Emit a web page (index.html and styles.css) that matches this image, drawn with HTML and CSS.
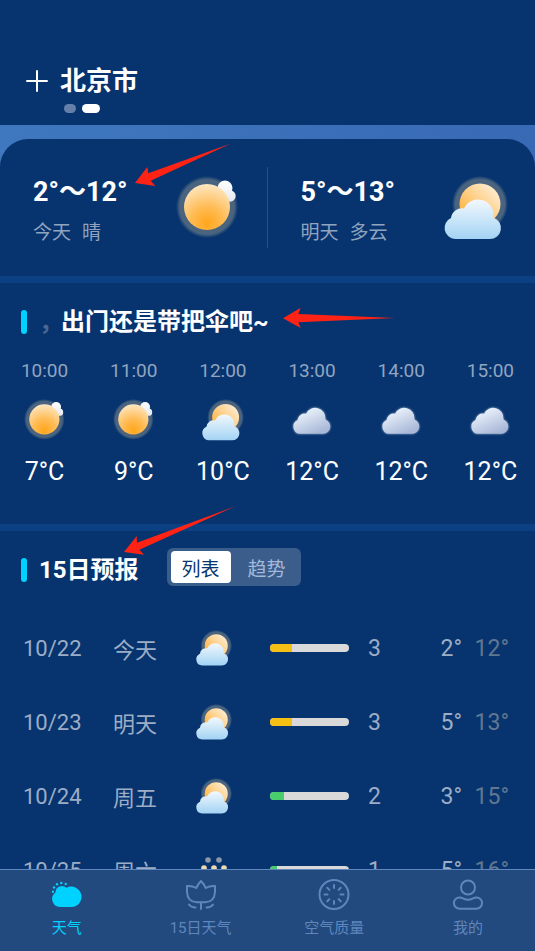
FILE: index.html
```html
<!DOCTYPE html>
<html lang="zh-CN">
<head>
    <meta charset="UTF-8">
    <meta name="viewport" content="width=device-width, initial-scale=1.0">
    <title>天气</title>
    <link rel="stylesheet" href="styles.css">
</head>
<body>

    <!-- Weather icons -->
    <svg class="sprite" width="0" height="0" aria-hidden="true">
        <defs>
            <radialGradient id="sunFill" cx="0.5" cy="0.85" r="0.9">
                <stop offset="0" stop-color="#ffa61c"/>
                <stop offset="0.4" stop-color="#ffbc55"/>
                <stop offset="1" stop-color="#fdebcd"/>
            </radialGradient>
            <linearGradient id="sunBehind" x1="0.1" y1="0.8" x2="0.8" y2="0.1">
                <stop offset="0" stop-color="#ffb340"/>
                <stop offset="1" stop-color="#feeacb"/>
            </linearGradient>
            <radialGradient id="halo">
                <stop offset="0.88" stop-color="#f7dfa8" stop-opacity="0.28"/>
                <stop offset="1" stop-color="#f7dfa8" stop-opacity="0"/>
            </radialGradient>
            <linearGradient id="cloudBlue" gradientUnits="userSpaceOnUse" x1="28" y1="23" x2="28" y2="63">
                <stop offset="0" stop-color="#f3f9fe"/>
                <stop offset="1" stop-color="#a3d3f4"/>
            </linearGradient>
            <linearGradient id="cloudGrey" gradientUnits="userSpaceOnUse" x1="20" y1="26" x2="36" y2="63">
                <stop offset="0" stop-color="#eaf2fb"/>
                <stop offset="1" stop-color="#a9b8d8"/>
            </linearGradient>
            <linearGradient id="puff" gradientUnits="userSpaceOnUse" x1="50" y1="4" x2="50" y2="26">
                <stop offset="0" stop-color="#ffffff"/>
                <stop offset="1" stop-color="#e4e9ef"/>
            </linearGradient>
            <filter id="glow" x="-20%" y="-20%" width="140%" height="140%">
                <feGaussianBlur stdDeviation="2"/>
            </filter>
            <path id="cloud" d="M11 63A11 11 0 0 1 7 42A11 11 0 0 1 20 32.500A15.500 15.500 0 0 1 49.500 40.500L49.800 41.700A11 11 0 0 1 46 63Z"/>
        </defs>
        <symbol id="sunny" viewBox="0 0 64 64" overflow="visible">
            <circle cx="31" cy="31" r="31" fill="url(#halo)"/>
            <g fill="url(#puff)">
                <circle cx="49" cy="12" r="7.500"/>
                <circle cx="54" cy="20" r="5.700"/>
            </g>
            <circle cx="31" cy="31" r="23" fill="url(#sunFill)"/>
        </symbol>
        <symbol id="cloudy" viewBox="0 0 64 64" overflow="visible">
            <circle cx="36" cy="28" r="28" fill="url(#halo)"/>
            <circle cx="36" cy="28" r="20.500" fill="url(#sunBehind)"/>
            <use href="#cloud" fill="url(#cloudBlue)"/>
        </symbol>
        <symbol id="overcast" viewBox="0 0 64 64" overflow="visible">
            <g transform="translate(3 -10)">
                <use href="#cloud" fill="#c9d5e8" opacity="0.8" filter="url(#glow)"/>
                <use href="#cloud" fill="url(#cloudGrey)"/>
            </g>
        </symbol>
        <symbol id="haze" viewBox="0 0 36 36" overflow="visible">
            <g fill="#8c98a8">
                <circle cx="12" cy="8" r="2.800"/>
                <circle cx="23" cy="8" r="2.800"/>
            </g>
            <g fill="#f0d9b0">
                <circle cx="8" cy="16" r="2.800"/>
                <circle cx="18" cy="16" r="2.800"/>
                <circle cx="28" cy="16" r="2.800"/>
                <circle cx="12" cy="24" r="2.800"/>
                <circle cx="23" cy="24" r="2.800"/>
            </g>
        </symbol>
    </svg>

    <main>
        <header>
            <div class="city">
                <button class="add" type="button" aria-label="添加城市">
                    <svg width="22" height="22" viewBox="0 0 22 22"><path d="M11 1V21M1 11H21" stroke="#fff" stroke-width="2" stroke-linecap="round"/></svg>
                </button>
                <h1>北京市</h1>
            </div>
            <div class="dots">
                <span class="dot"></span>
                <span class="dot active"></span>
            </div>
        </header>

        <div class="sky">
            <section class="days">
                <div class="day">
                    <div>
                        <p class="range">2°～12°</p>
                        <p class="desc"><span>今天</span><span>晴</span></p>
                    </div>
                    <svg class="icon-large"><use href="#sunny"/></svg>
                </div>
                <div class="day">
                    <div>
                        <p class="range">5°～13°</p>
                        <p class="desc"><span>明天</span><span>多云</span></p>
                    </div>
                    <svg class="icon-large"><use href="#cloudy"/></svg>
                </div>
            </section>
        </div>

        <section class="hourly">
            <h2><span class="comma">，</span>出门还是带把伞吧~</h2>
            <ul class="hours">
                <li><span class="time">10:00</span><svg class="icon-medium"><use href="#sunny"/></svg><span class="temp">7°C</span></li>
                <li><span class="time">11:00</span><svg class="icon-medium"><use href="#sunny"/></svg><span class="temp">9°C</span></li>
                <li><span class="time">12:00</span><svg class="icon-medium"><use href="#cloudy"/></svg><span class="temp">10°C</span></li>
                <li><span class="time">13:00</span><svg class="icon-medium"><use href="#overcast"/></svg><span class="temp">12°C</span></li>
                <li><span class="time">14:00</span><svg class="icon-medium"><use href="#overcast"/></svg><span class="temp">12°C</span></li>
                <li><span class="time">15:00</span><svg class="icon-medium"><use href="#overcast"/></svg><span class="temp">12°C</span></li>
            </ul>
        </section>

        <section class="forecast">
            <div class="forecast-head">
                <h2>15日预报</h2>
                <div class="toggle">
                    <button type="button" class="active">列表</button>
                    <button type="button">趋势</button>
                </div>
            </div>
            <table>
                <tr>
                    <td class="date">10/22</td>
                    <td class="week">今天</td>
                    <td class="sky-icon"><svg class="icon-small"><use href="#cloudy"/></svg></td>
                    <td class="air"><div class="bar"><div class="fill yellow" style="width: 28%"></div></div></td>
                    <td>3</td>
                    <td class="low">2°</td>
                    <td class="high">12°</td>
                </tr>
                <tr>
                    <td class="date">10/23</td>
                    <td class="week">明天</td>
                    <td class="sky-icon"><svg class="icon-small"><use href="#cloudy"/></svg></td>
                    <td class="air"><div class="bar"><div class="fill yellow" style="width: 28%"></div></div></td>
                    <td>3</td>
                    <td class="low">5°</td>
                    <td class="high">13°</td>
                </tr>
                <tr>
                    <td class="date">10/24</td>
                    <td class="week">周五</td>
                    <td class="sky-icon"><svg class="icon-small"><use href="#cloudy"/></svg></td>
                    <td class="air"><div class="bar"><div class="fill green" style="width: 18%"></div></div></td>
                    <td>2</td>
                    <td class="low">3°</td>
                    <td class="high">15°</td>
                </tr>
                <tr>
                    <td class="date">10/25</td>
                    <td class="week">周六</td>
                    <td class="sky-icon"><svg class="icon-small"><use href="#haze"/></svg></td>
                    <td class="air"><div class="bar"><div class="fill green" style="width: 9%"></div></div></td>
                    <td>1</td>
                    <td class="low">5°</td>
                    <td class="high">16°</td>
                </tr>
            </table>
        </section>

        <!-- Red pointer arrows -->
        <svg class="arrows" width="535" height="600" viewBox="0 0 535 600" fill="#ff2315" aria-hidden="true">
            <path d="M135 183L147.300 167L148.300 173.300L231 143.500L150.700 180.700L155.300 186Z"/>
            <path d="M283 318.300L300.700 307.700L298.300 314L395 318L298.300 322.300L300.700 328Z"/>
            <path d="M124 552L136.700 536L137 542.700L235.300 506.300L139.300 549.700L144 554.700Z"/>
        </svg>
    </main>

    <nav>
        <a href="#" class="active">
            <svg viewBox="0 0 32 32" fill="currentColor">
                <path d="M9 28A8 8 0 0 1 4.500 13.500A6.500 6.500 0 0 1 15.500 8.800A10.200 10.200 0 1 1 20.500 28Z"/>
                <circle cx="10.300" cy="4" r="1.200"/>
                <circle cx="6" cy="5.300" r="1.200"/>
                <circle cx="3" cy="8.500" r="1.200"/>
                <circle cx="2" cy="12.700" r="1.200"/>
                <circle cx="14.700" cy="5" r="1.200"/>
            </svg>
            天气
        </a>
        <a href="#">
            <svg viewBox="0 0 32 32" fill="none" stroke="currentColor" stroke-width="2" stroke-linecap="round" stroke-linejoin="round">
                <path d="M16 2Q13 5 11.300 9Q7 6.500 2 7V13Q2.500 23 12 23.300H20Q29.500 23 30 13V7Q25 6.500 20.700 9Q19 5 16 2Z"/>
                <path d="M16 23.500V30M4 25.500Q6 28.500 10.500 28.500M28 25.500Q26 28.500 21.500 28.500"/>
            </svg>
            15日天气
        </a>
        <a href="#">
            <svg viewBox="0 0 32 32" fill="none" stroke="currentColor" stroke-width="2" stroke-linecap="round">
                <circle cx="16" cy="15.500" r="14.500"/>
                <path d="M16 6V9M16 22V25M6.500 15.500H9.500M22.500 15.500H25.500M9.300 8.800L11.400 10.900M20.600 20.100L22.700 22.200M22.700 8.800L20.600 10.900M11.400 20.100L9.300 22.200"/>
            </svg>
            空气质量
        </a>
        <a href="#">
            <svg viewBox="0 0 32 32" fill="none" stroke="currentColor" stroke-width="2">
                <circle cx="16" cy="8.500" r="7"/>
                <path d="M7.500 18.500C11 18.500 12 20.800 16 20.800S21 18.500 24.500 18.500A5.600 5.600 0 0 1 24.500 29.700H7.500A5.600 5.600 0 0 1 7.500 18.500Z"/>
            </svg>
            我的
        </a>
    </nav>

</body>
</html>
```
FILE: styles.css
```css
* {
    box-sizing: border-box;
}
body {
    margin: 0;
    height: 100vh;
    display: flex;
    flex-direction: column;
    font-family: Roboto, "Noto Sans CJK SC", sans-serif;
    background: #07346f;
    color: #fff;
}
h1, h2, p, ul {
    margin: 0;
    padding: 0;
}
button {
    font-family: inherit;
    border: none;
    padding: 0;
    background: none;
    cursor: pointer;
}
svg {
    display: block;
}
.sprite {
    position: absolute;
}
main {
    position: relative;
    flex: 1;
    min-height: 0;
    overflow: hidden;
}

/* City header */
header {
    padding: 61px 26px 12px;
}
.city {
    display: flex;
    align-items: center;
    gap: 12px;
}
h1 {
    font-size: 26px;
    line-height: 40px;
}
.dots {
    display: flex;
    gap: 6px;
    margin-top: 3px;
    padding-left: 38px;
}
.dot {
    width: 12px;
    height: 9px;
    border-radius: 5px;
    background: #6480a8;
}
.dot.active {
    width: 18px;
    background: #fff;
}

/* Today / tomorrow */
.sky {
    padding-top: 14px;
    background: linear-gradient(to right, #3f78be, #3869b5);
}
.days {
    display: grid;
    grid-template-columns: 1fr 1fr;
    padding: 28px 0;
    background: #07346f;
    border-radius: 28px 28px 0 0;
}
.day {
    display: flex;
    justify-content: space-between;
    align-items: center;
    padding: 0 27px 0 33px;
}
.day:first-child {
    border-right: 1px solid #2b4f7d;
}
.range {
    font-size: 27px;
    font-weight: bold;
    line-height: 51px;
}
.desc {
    display: flex;
    gap: 11px;
    font-size: 19px;
    line-height: 30px;
    color: #91a4bf;
}
.icon-large {
    width: 64px;
    height: 64px;
    overflow: visible;
}
.icon-medium {
    width: 42px;
    height: 42px;
    overflow: visible;
}
.icon-small {
    width: 36px;
    height: 36px;
    overflow: visible;
}

/* Hourly */
.hourly, .forecast {
    border-top: 7px solid #0b4084;
}
.hourly {
    padding: 23px 0 37px;
}
h2 {
    display: flex;
    align-items: center;
    font-size: 24px;
    line-height: 32px;
    padding-left: 21px;
}
h2::before {
    content: "";
    width: 6px;
    height: 24px;
    margin-right: 12px;
    border-radius: 3px;
    background: #00d2ff;
}
.comma {
    width: 22px;
    color: #4a6994;
}
.hours {
    display: grid;
    grid-template-columns: repeat(6, 1fr);
    margin-top: 21px;
    list-style: none;
}
.hours li {
    display: flex;
    flex-direction: column;
    align-items: center;
}
.time {
    font-size: 19px;
    line-height: 24px;
    margin-bottom: 16px;
    color: #91a4bf;
}
.temp {
    font-size: 25px;
    line-height: 30px;
    margin-top: 16px;
}

/* 15 day list */
.forecast {
    padding-top: 17px;
}
.forecast-head {
    display: flex;
    align-items: flex-end;
    gap: 28px;
}
.toggle {
    display: flex;
    gap: 6px;
    padding: 3px 4px;
    border-radius: 6px;
    background: #3b5d8c;
}
.toggle button {
    width: 60px;
    height: 32px;
    border-radius: 4px;
    font-size: 19px;
    color: #a3b9d9;
}
.toggle .active {
    background: #fff;
    color: #07346f;
}
table {
    width: 100%;
    margin-top: 25px;
    border-collapse: collapse;
    table-layout: fixed;
    font-size: 23px;
    color: #9cadc5;
}
td {
    height: 74px;
    padding: 0;
}
.date {
    width: 113px;
    padding-left: 23px;
    font-size: 22px;
}
.week {
    width: 83px;
    font-size: 22px;
}
.sky-icon {
    width: 74px;
}
.air {
    width: 98px;
}
.bar {
    width: 79px;
    height: 8px;
    border-radius: 4px;
    background: #d9d9d9;
    overflow: hidden;
}
.fill {
    height: 100%;
}
.yellow {
    background: #f5bf14;
}
.green {
    background: #48cc6c;
}
.low {
    text-align: right;
}
.high {
    width: 73px;
    padding-right: 26px;
    text-align: right;
    color: #62778f;
}

.arrows {
    position: absolute;
    top: 0;
    left: 0;
    pointer-events: none;
}

/* Bottom tabs */
nav {
    display: grid;
    grid-template-columns: repeat(4, 1fr);
    padding: 9px 0 13px;
    background: #224a7e;
    border-top: 1px solid #5f86bd;
}
nav a {
    display: flex;
    flex-direction: column;
    align-items: center;
    gap: 7px;
    font-size: 15px;
    line-height: 20px;
    color: #5f86bd;
    text-decoration: none;
}
nav a.active {
    color: #00d2ff;
}
nav svg {
    width: 32px;
    height: 32px;
}
```
